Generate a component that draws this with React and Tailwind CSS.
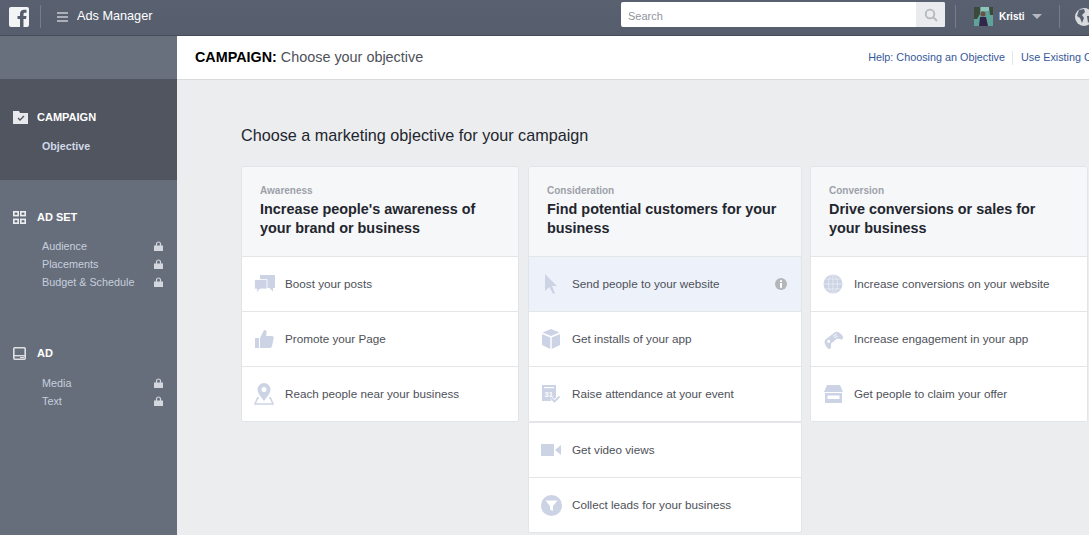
import React from 'react';

const C = '#ccd3e4';
const Icons = {
  boost: <svg width="21" height="19" viewBox="0 0 21 19"><path fill={C} d="M6 0h15v13h-2v3.500L15.500 13H6z"/><path fill={C} stroke="#fff" strokeWidth=".8" d="M.5 4.500H13V14H6l-3.200 4v-4H.5z"/></svg>,
  like: <svg width="20" height="20" viewBox="0 0 20 20"><path fill={C} d="M1 9h4v10H1zM6 9l4-8c2 0 3 1 2.600 3L12 7h6c1.500 0 2 1 1.600 2.500L18 17c-.3 1.300-1 2-2.500 2H6z"/></svg>,
  pin: <svg width="20" height="22" viewBox="0 0 20 22"><path fill={C} fillRule="evenodd" d="M10 0a6.500 6.500 0 0 1 6.500 6.500C16.500 10.500 12 15 10 18 8 15 3.500 10.500 3.500 6.500A6.500 6.500 0 0 1 10 0zm0 4a2.500 2.500 0 1 0 0 5 2.500 2.500 0 0 0 0-5z"/><path fill="none" stroke={C} strokeWidth="1.500" d="M5 15H3.500L1 21h18l-2.500-6H15"/></svg>,
  cursor: <svg width="14" height="20" viewBox="0 0 14 20"><path fill={C} d="M1 0l12 12H8l3 7-2 1-3.500-7L1 17z"/></svg>,
  box: <svg width="20" height="20" viewBox="0 0 20 20"><path fill={C} d="M10 0l8.500 3.500L10 7 1.500 3.500zM1 5l8.300 3.500V20L1 16zM19 5l-8.300 3.500V20L19 16z"/></svg>,
  calendar: <svg width="19" height="18" viewBox="0 0 19 18"><path fill={C} d="M0 0h14v16H0z"/><rect x="2" y="2" width="10" height="1.200" fill="#fff"/><text x="2.500" y="12" fontSize="7.500" fontWeight="700" fill="#fff" fontFamily="Liberation Sans">31</text><path fill="none" stroke="#fff" strokeWidth="3.500" d="M9.500 13.500l3 3 5-5"/><path fill="none" stroke={C} strokeWidth="1.800" d="M9.500 13.500l3 3 5-5"/></svg>,
  video: <svg width="20" height="12" viewBox="0 0 20 12"><rect width="13" height="12" fill={C}/><path fill={C} d="M14 6l6-5v10z"/></svg>,
  filter: <svg width="21" height="21" viewBox="0 0 21 21"><circle cx="10.500" cy="10.500" r="10.500" fill={C}/><path fill="#fff" d="M4.500 5.500h12L12 11v5l-3-1.500V11z"/></svg>,
  globe: <svg width="20" height="20" viewBox="0 0 20 20"><circle cx="10" cy="10" r="9.500" fill={C}/><g fill="none" stroke="#eef0f6" strokeWidth=".7"><ellipse cx="10" cy="10" rx="4.500" ry="9.500"/><path d="M10 .5v19M.5 10h19M2 5h16M2 15h16"/></g></svg>,
  game: <svg width="20" height="19" viewBox="0 0 20 19"><g transform="rotate(-38 10 9.500)"><path fill={C} d="M4.500 5h11c2.500 0 3.500 2 4 5 .5 3-.2 5-1.700 5-1.500 0-2.300-2-3.800-3.500h-8C4.500 13 3.700 15 2.200 15 .7 15 0 13 .5 10c.5-3 1.500-5 4-5z"/><circle cx="5.500" cy="8.300" r="1.500" fill="#fff"/><g fill="#fff"><circle cx="13" cy="7.200" r=".7"/><circle cx="15" cy="7.200" r=".7"/><circle cx="13" cy="9.200" r=".7"/><circle cx="15" cy="9.200" r=".7"/></g></g></svg>,
  store: <svg width="19" height="18" viewBox="0 0 19 18"><path fill={C} d="M3 0h13l3 7H0zM1 8h17v10H1z"/><rect x="3.500" y="10.500" width="12" height="3.500" fill="#fff"/></svg>,
};

function Lock() {
  return <svg width="9" height="10" viewBox="0 0 9 10" className="block"><path fill="none" stroke="#d4d7dd" strokeWidth="1.200" d="M2.500 5V3a2 2 0 0 1 4 0v2"/><rect y="4.500" width="9" height="5.500" fill="#d4d7dd"/></svg>;
}

function SubItem({ label }) {
  return (
    <div className="flex h-[18px] items-center justify-between pl-[42px] pr-[14px] text-[10.800px] text-[#c6cede]">
      <span>{label}</span>
      <Lock />
    </div>
  );
}

function SectionTitle({ icon, label }) {
  return (
    <div className="flex h-[18px] items-center pl-[13px] text-[11px] font-bold text-white">
      <span className="flex w-[24px] items-center">{icon}</span>
      {label}
    </div>
  );
}

function Row({ icon, label, active, info }) {
  return (
    <div className={`flex h-[55px] items-center border-t border-[#e4e6ea] ${active ? 'bg-[#edf2fa]' : 'bg-white'}`}>
      <span className="flex w-[43px] shrink-0 items-center justify-center pl-[1px]">{icon}</span>
      <span className="text-[11.700px] text-[#4e5159]">{label}</span>
      {info && (
        <svg width="12" height="12" viewBox="0 0 12 12" className="ml-auto mr-[14px]"><circle cx="6" cy="6" r="6" fill="#b4b6ba"/><rect x="5" y="2.200" width="2" height="1.800" fill="#fff"/><rect x="5" y="5" width="2" height="4.800" fill="#fff"/></svg>
      )}
    </div>
  );
}

function Card({ width, kicker, title, rows, extra }) {
  return (
    <div className="shrink-0" style={{ width }}>
      <div className="overflow-hidden rounded-[3px] border border-[#e2e4e8] bg-white">
        <div className="h-[89px] bg-[#f6f7f9] pl-[18px] pt-[17px]">
          <div className="text-[10px] leading-[13px] font-bold text-[#9da1a9]">{kicker}</div>
          <div className="mt-[3px] text-[14.400px] leading-[19px] font-bold text-[#23262e]">{title}</div>
        </div>
        {rows.map((r) => <Row key={r.label} {...r} />)}
      </div>
      {extra && (
        <div className="overflow-hidden rounded-b-[3px] border-x border-b border-[#e2e4e8] bg-white">
          {extra.map((r) => <Row key={r.label} {...r} />)}
        </div>
      )}
    </div>
  );
}

export default function App() {
  return (
    <div className="flex h-[535px] w-[1089px] flex-col overflow-hidden bg-[#ecedef] font-['Liberation_Sans',Arial,sans-serif]">
      <header className="flex h-[36px] shrink-0 items-center border-b border-[#464d59] bg-gradient-to-b from-[#596171] to-[#565e6e] pb-[2px]">
        <div className="ml-[9px] flex h-[20px] w-[20px] shrink-0 items-end justify-end overflow-hidden rounded-[2px] bg-[#f3f4f6]">
          <svg width="13" height="18" viewBox="0 0 13 18"><path fill="#565e6e" d="M4 18v-8H1.500V7H4V4.800C4 2 5.800.7 8 .7h2.500v3H9c-1 0-1.500.5-1.500 1.500V7h3l-.5 3H7.500v8z"/></svg>
        </div>
        <div className="ml-[11px] h-[23px] w-px shrink-0 bg-[#767d8a]" />
        <svg width="12" height="10" viewBox="0 0 12 10" className="ml-[16px] shrink-0"><path stroke="#fff" strokeWidth="1.200" d="M0 1h11M0 5h11M0 9h11"/></svg>
        <span className="ml-[8px] w-[76px] shrink-0 text-[12.700px] whitespace-nowrap text-white">Ads Manager</span>
        <div className="ml-[468px] mt-[2px] flex h-[25px] w-[324px] shrink-0 self-start overflow-hidden rounded-[2px] bg-white">
          <span className="flex-1 pl-[7px] pt-[2px] text-[11px] leading-[25px] text-[#90949c]">Search</span>
          <span className="flex w-[29px] items-center justify-center bg-[#e9ebee]">
            <svg width="14" height="14" viewBox="0 0 14 14" fill="none" stroke="#b5b8be" strokeWidth="1.800"><circle cx="6" cy="6" r="4.300"/><path d="M9 9l4 4"/></svg>
          </span>
        </div>
        <div className="ml-[10px] h-[23px] w-px shrink-0 bg-[#767d8a]" />
        <svg width="19" height="19" viewBox="0 0 19 19" className="ml-[18px] shrink-0">
          <rect width="19" height="19" fill="#5fa39b" />
          <path fill="#3c4a3c" d="M0 0h6v7l-3 5H0zM15 0h4v8h-3z" />
          <path fill="#8fc4ba" d="M7 0h8v4H7z" />
          <circle cx="9" cy="7" r="2.500" fill="#6d4f45" />
          <path fill="#33264a" d="M5 19l1-9h6l2 9z" />
        </svg>
        <span className="ml-[6px] w-[24px] shrink-0 text-[10px] font-bold text-white">Kristi</span>
        <svg width="10" height="5" viewBox="0 0 10 5" className="ml-[9px] shrink-0"><path fill="#b4b9c2" d="M0 0h10L5 5z"/></svg>
        <div className="ml-[17px] h-[23px] w-px shrink-0 bg-[#767d8a]" />
        <svg width="20" height="20" viewBox="0 0 20 20" className="ml-[14px] shrink-0"><circle cx="10" cy="10" r="9" fill="#d8dade"/><path fill="#596171" d="M5 3l5-1 1 3-3 3 2 3-2 5-2-5-3-2zM13 9l4 0 0 4-3 3z"/></svg>
      </header>

      <div className="flex min-h-0 flex-1">
        <aside className="flex w-[177px] shrink-0 flex-col bg-[#676e7b]">
          <div className="h-[43px] bg-[#686f7d]" />
          <div className="h-[101px] bg-[#50555f] pt-[29px]">
            <SectionTitle
              label="CAMPAIGN"
              icon={<svg width="15" height="13" viewBox="0 0 15 13"><path fill="#e8e9ec" d="M0 0h6l1 2h8v11H0z"/><path fill="none" stroke="#50555f" strokeWidth="1.300" d="M5 7l2 2 4-4"/></svg>}
            />
            <div className="mt-[12px] pl-[42px] text-[10.700px] font-bold text-[#d2d9e8]">Objective</div>
          </div>
          <div className="pt-[28px]">
            <SectionTitle
              label="AD SET"
              icon={<svg width="13" height="13" viewBox="0 0 13 13" fill="none" stroke="#eceef0" strokeWidth="1.600"><rect x=".8" y=".8" width="4.400" height="3.800"/><rect x="7.800" y=".8" width="4.400" height="3.800"/><rect x=".8" y="8.400" width="4.400" height="3.800"/><rect x="7.800" y="8.400" width="4.400" height="3.800"/></svg>}
            />
            <div className="mt-[11px]">
              <SubItem label="Audience" />
              <SubItem label="Placements" />
              <SubItem label="Budget & Schedule" />
            </div>
          </div>
          <div className="pt-[53px]">
            <SectionTitle
              label="AD"
              icon={<svg width="13" height="13" viewBox="0 0 13 13"><rect x=".8" y=".8" width="11.400" height="11.400" rx="1" fill="none" stroke="#dfe1e5" strokeWidth="1.600"/><rect x="0" y="8" width="13" height="1.400" fill="#dfe1e5"/><rect x="7" y="10" width="4" height="1" fill="#dfe1e5"/></svg>}
            />
            <div className="mt-[12px]">
              <SubItem label="Media" />
              <SubItem label="Text" />
            </div>
          </div>
        </aside>

        <main className="flex min-w-0 flex-1 flex-col">
          <div className="flex h-[44px] shrink-0 items-center border-b border-[#d9dadc] bg-white pl-[18px]">
            <span className="text-[14.350px] font-bold text-black">CAMPAIGN:</span>
            <span className="ml-[4px] text-[14.400px] text-[#4e5159]">Choose your objective</span>
            <div className="ml-auto flex shrink-0 items-center text-[10.800px] text-[#365899]">
              <span className="whitespace-nowrap">Help: Choosing an Objective</span>
              <span className="ml-[7px] h-[14px] w-px bg-[#e5e6e9]" />
              <span className="w-[76px] overflow-hidden pl-[8px] whitespace-nowrap">Use Existing Campaign</span>
            </div>
          </div>
          <div className="pl-[64px] pt-[45px]">
            <h1 className="text-[16.200px] leading-[20px] font-normal text-[#23262e]">Choose a marketing objective for your campaign</h1>
            <div className="mt-[21px] flex items-start">
              <Card
                width={278}
                kicker="Awareness"
                title={<>Increase people's awareness of<br />your brand or business</>}
                rows={[
                  { icon: Icons.boost, label: 'Boost your posts' },
                  { icon: Icons.like, label: 'Promote your Page' },
                  { icon: Icons.pin, label: 'Reach people near your business' },
                ]}
              />
              <div className="ml-[9px]">
                <Card
                  width={274}
                  kicker="Consideration"
                  title={<>Find potential customers for your<br />business</>}
                  rows={[
                    { icon: Icons.cursor, label: 'Send people to your website', active: true, info: true },
                    { icon: Icons.box, label: 'Get installs of your app' },
                    { icon: Icons.calendar, label: 'Raise attendance at your event' },
                  ]}
                  extra={[
                    { icon: Icons.video, label: 'Get video views' },
                    { icon: Icons.filter, label: 'Collect leads for your business' },
                  ]}
                />
              </div>
              <div className="ml-[8px]">
                <Card
                  width={278}
                  kicker="Conversion"
                  title={<>Drive conversions or sales for<br />your business</>}
                  rows={[
                    { icon: Icons.globe, label: 'Increase conversions on your website' },
                    { icon: Icons.game, label: 'Increase engagement in your app' },
                    { icon: Icons.store, label: 'Get people to claim your offer' },
                  ]}
                />
              </div>
            </div>
          </div>
        </main>
      </div>
    </div>
  );
}
